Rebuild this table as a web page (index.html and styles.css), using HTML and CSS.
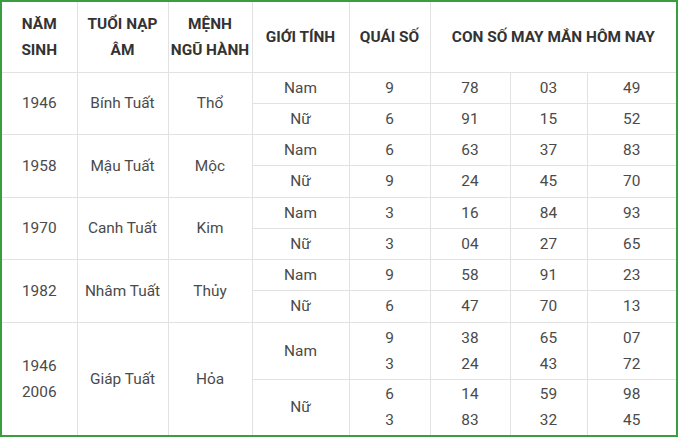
FILE: index.html
```html
<!DOCTYPE html>
<html lang="vi">
<head>
<meta charset="utf-8">
<link rel="stylesheet" href="styles.css">
</head>
<body>
<div class="frame">
<table class="lucky">
<colgroup>
<col class="c1"><col class="c2"><col class="c3"><col class="c4"><col class="c5"><col class="c6"><col class="c7"><col class="c8">
</colgroup>
<thead>
<tr class="head">
<th>NĂM<br>SINH</th>
<th>TUỔI NẠP<br>ÂM</th>
<th>MỆNH<br>NGŨ HÀNH</th>
<th>GIỚI TÍNH</th>
<th>QUÁI SỐ</th>
<th colspan="3">CON SỐ MAY MẮN HÔM NAY</th>
</tr>
</thead>
<tbody>
<tr class="r"><td rowspan="2" class="nudge-r">1946</td><td rowspan="2">Bính Tuất</td><td rowspan="2">Thổ</td><td>Nam</td><td>9</td><td>78</td><td>03</td><td>49</td></tr>
<tr class="r"><td>Nữ</td><td>6</td><td>91</td><td>15</td><td>52</td></tr>
<tr class="r"><td rowspan="2">1958</td><td rowspan="2">Mậu Tuất</td><td rowspan="2">Mộc</td><td>Nam</td><td>6</td><td>63</td><td>37</td><td>83</td></tr>
<tr class="r"><td>Nữ</td><td>9</td><td>24</td><td>45</td><td>70</td></tr>
<tr class="r"><td rowspan="2" class="nudge-l">1970</td><td rowspan="2">Canh Tuất</td><td rowspan="2" class="nudge-r">Kim</td><td>Nam</td><td>3</td><td>16</td><td>84</td><td>93</td></tr>
<tr class="r"><td>Nữ</td><td>3</td><td>04</td><td>27</td><td>65</td></tr>
<tr class="r"><td rowspan="2">1982</td><td rowspan="2">Nhâm Tuất</td><td rowspan="2">Thủy</td><td>Nam</td><td>9</td><td>58</td><td>91</td><td>23</td></tr>
<tr class="r"><td>Nữ</td><td>6</td><td>47</td><td>70</td><td>13</td></tr>
<tr class="r2"><td rowspan="2">1946<br>2006</td><td rowspan="2">Giáp Tuất</td><td rowspan="2">Hỏa</td><td>Nam</td><td>9<br>3</td><td>38<br>24</td><td>65<br>43</td><td>07<br>72</td></tr>
<tr class="r3"><td>Nữ</td><td>6<br>3</td><td>14<br>83</td><td>59<br>32</td><td>98<br>45</td></tr>
</tbody>
</table>
</div>
</body>
</html>
```
FILE: styles.css
```css
html, body {
  margin: 0;
  padding: 0;
  background: #ffffff;
}
.frame {
  width: 674px;
  height: 433px;
  border: 2px solid #3a9d3f;
  overflow: hidden;
}
.lucky {
  width: 674px;
  border-collapse: collapse;
  border-style: hidden;
  table-layout: fixed;
  font-family: Roboto, "Liberation Sans", Arial, sans-serif;
  font-size: 15.4px;
  color: #4a4a4a;
}
.c1 { width: 75px; }
.c2 { width: 91px; }
.c3 { width: 84px; }
.c4 { width: 97px; }
.c5 { width: 81px; }
.c6 { width: 80px; }
.c7 { width: 77px; }
.c8 { width: 89px; }
.lucky th,
.lucky td {
  border: 1px solid #e2e2e2;
  text-align: center;
  vertical-align: middle;
  padding: 0;
}
.lucky th {
  font-weight: 700;
  color: #333333;
  line-height: 26px;
}
.lucky td {
  line-height: 26px;
}
.head { height: 70px; }
.r { height: 31.25px; }
.r2 { height: 57px; }
.r3 { height: 56px; }
.nudge-l { padding-right: 10px; }
.nudge-r { padding-left: 4px; }
```
